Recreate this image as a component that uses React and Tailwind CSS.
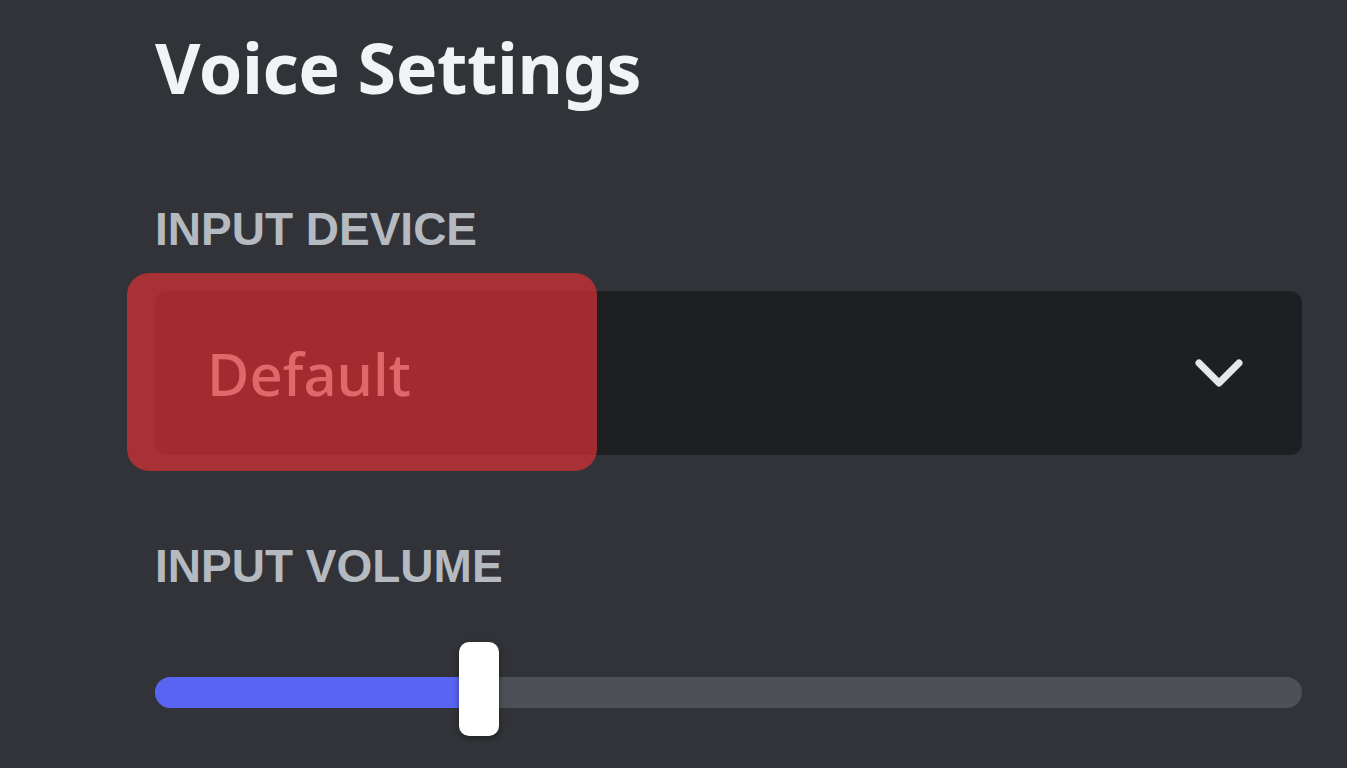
import React from "react";

const Chevron = () => (
  <svg width="50" height="30" viewBox="0 0 50 30" fill="none">
    <path d="M5 5 L25 25 L45 5" stroke="#e6e7e9" strokeWidth="7" strokeLinecap="round" strokeLinejoin="round" />
  </svg>
);

const App = () => {
  return (
    <div className="w-[1347px] h-[768px] overflow-hidden bg-[#313338] pl-[155px] pr-[45px]">
      <h1
        className="pt-[22px] text-[70px] leading-[90px] font-bold text-[#f2f3f5] tracking-[-0.4px]"
        style={{ fontFamily: "'Noto Sans', sans-serif" }}
      >
        Voice Settings
      </h1>

      <div
        className="mt-[92px] text-[46px] leading-[50px] font-bold text-[#b5bac1]"
        style={{ fontFamily: "'Liberation Sans', Arial, sans-serif" }}
      >
        INPUT DEVICE
      </div>

      <div className="relative mt-[37px]">
        <div className="flex items-center justify-between h-[164px] rounded-[12px] bg-[#1e1f22] pl-[52px] pr-[58px]">
          <span
            className="text-[58px] font-medium text-[#dbdee1]"
            style={{ fontFamily: "'Noto Sans', sans-serif" }}
          >
            Default
          </span>
          <Chevron />
        </div>
        <div className="absolute left-[-28px] top-[-18px] w-[470px] h-[198px] rounded-[22px] bg-[rgba(224,48,52,0.68)]" />
      </div>

      <div
        className="mt-[86px] text-[46px] leading-[50px] font-bold text-[#b5bac1]"
        style={{ fontFamily: "'Liberation Sans', Arial, sans-serif" }}
      >
        INPUT VOLUME
      </div>

      <div className="relative mt-[51px] h-[94px] flex items-center">
        <div className="w-full h-[31px] mt-[6px] rounded-full bg-[#4e5058] overflow-hidden">
          <div className="h-full w-[320px] bg-[#5865f2]" />
        </div>
        <div className="absolute left-[304px] top-0 w-[40px] h-[94px] rounded-[10px] bg-white shadow-[0_2px_6px_rgba(0,0,0,0.4)]" />
      </div>
    </div>
  );
};

export default App;
